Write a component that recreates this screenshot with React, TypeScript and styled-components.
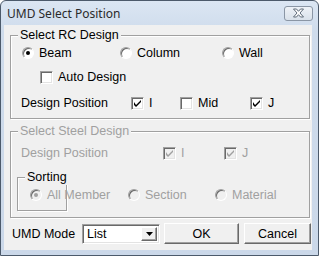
import styled, { createGlobalStyle } from "styled-components";

const Global = createGlobalStyle`
body{margin:0;background:#fff;}
`;

const font = `"Liberation Sans", Arial, sans-serif`;

const Window = styled.div`
width:319px;
height:256px;
box-sizing:border-box;
border:1px solid #4c5a6b;
border-radius:6px 6px 0 0;
background:linear-gradient(#dbe6f3, #cfdcec 30px, #cbd8e9);
display:flex;
flex-direction:column;
font-family:${font};
`;

const TitleBar = styled.div`
height:24px;
display:flex;
align-items:center;
padding:0 5px 0 6px;
`;

const Title = styled.div`
flex:1;
font-family:"Noto Sans", sans-serif;
font-size:12px;
color:#2a2a2a;
`;

const CloseBtn = styled.div`
width:29px;
height:15px;
box-sizing:border-box;
border:1px solid #8a96a5;
border-radius:3px;
background:linear-gradient(#eef2f7, #d9e1ea);
display:flex;
align-items:center;
justify-content:center;
`;

const Client = styled.div`
margin:0 6px 5px 3px;
flex:1;
background:#f0f0f0;
display:flex;
flex-direction:column;
font-size:12.5px;
color:#000;
`;

const Group = styled.div<{ $mt: number; $h: number }>`
position:relative;
margin:${(p) => p.$mt}px 2px 0 6px;
height:${(p) => p.$h}px;
box-sizing:border-box;
border:1px solid #a0a0a0;
box-shadow:inset 1px 1px 0 #fff, 1px 1px 0 #fff;
`;

const Legend = styled.div<{ $disabled?: boolean }>`
position:absolute;
top:-8px;
left:7px;
padding:0 2px;
line-height:15px;
background:#f0f0f0;
color:${(p) => (p.$disabled ? "#a0a0a0" : "#000")};
`;

const Row = styled.div<{ $cols: string; $pl: number; $mt: number }>`
display:grid;
grid-template-columns:${(p) => p.$cols};
align-items:center;
height:18px;
padding-left:${(p) => p.$pl}px;
margin-top:${(p) => p.$mt}px;
`;

const Item = styled.div<{ $disabled?: boolean }>`
display:flex;
align-items:center;
gap:5px;
white-space:nowrap;
color:${(p) => (p.$disabled ? "#a0a0a0" : "#000")};
`;

const Label = styled.span<{ $disabled?: boolean }>`
color:${(p) => (p.$disabled ? "#a0a0a0" : "#000")};
white-space:nowrap;
`;

const CheckBox = styled.span<{ $disabled?: boolean }>`
width:13px;
height:13px;
box-sizing:border-box;
border:1px solid;
border-color:#a0a0a0 #fff #fff #a0a0a0;
box-shadow:inset 1px 1px 0 #696969, inset -1px -1px 0 #e3e3e3;
background:${(p) => (p.$disabled ? "#f0f0f0" : "#fff")};
display:flex;
align-items:center;
justify-content:center;
flex:none;
`;

const RadioDot = styled.span<{ $disabled?: boolean }>`
width:12px;
height:12px;
box-sizing:border-box;
border-radius:50%;
border:1px solid;
border-color:#a0a0a0 #fff #fff #a0a0a0;
box-shadow:inset 1px 1px 0 #696969;
background:${(p) => (p.$disabled ? "#f0f0f0" : "#fff")};
display:flex;
align-items:center;
justify-content:center;
flex:none;
&::after{
content:"";
width:4px;
height:4px;
border-radius:50%;
background:${(p) => (p.$disabled ? "#a0a0a0" : "#000")};
opacity:var(--on);
}
`;

const SortBox = styled.div`
position:relative;
width:50px;
height:34px;
margin:15px 0 0 6px;
box-sizing:border-box;
border:1px solid #a0a0a0;
box-shadow:inset 1px 1px 0 #fff, 1px 1px 0 #fff;
`;

const SortRow = styled(Row)`
width:290px;
`;

const Footer = styled.div`
display:flex;
align-items:center;
margin-top:5px;
padding-left:8px;
height:21px;
`;

const ModeLabel = styled.span`
width:70px;
`;

const Combo = styled.div`
width:78px;
height:20px;
box-sizing:border-box;
border:1px solid;
border-color:#a0a0a0 #fff #fff #a0a0a0;
box-shadow:inset 1px 1px 0 #696969, inset -1px -1px 0 #e3e3e3;
background:#fff;
display:flex;
align-items:center;
padding:2px 2px 2px 4px;
`;

const ComboText = styled.span`
flex:1;
`;

const ComboBtn = styled.span`
width:16px;
height:14px;
box-sizing:border-box;
background:#f0f0f0;
border:1px solid;
border-color:#fff #696969 #696969 #fff;
box-shadow:inset -1px -1px 0 #a0a0a0;
display:flex;
align-items:center;
justify-content:center;
`;

const Button = styled.div<{ $w: number; $ml: number }>`
width:${(p) => p.$w}px;
height:21px;
margin-left:${(p) => p.$ml}px;
box-sizing:border-box;
border:1px solid;
border-color:#fff #696969 #696969 #fff;
box-shadow:inset -1px -1px 0 #a0a0a0;
background:#f0f0f0;
display:flex;
align-items:center;
justify-content:center;
`;

const Check = ({ color }: { color: string }) => (
  <svg width="7" height="7" viewBox="0 0 7 7">
    <path d="M0 2v3l2 2 5-5V0L2 5z" fill={color} />
  </svg>
);

const Box = ({ checked, disabled }: { checked?: boolean; disabled?: boolean }) => (
  <CheckBox $disabled={disabled}>{checked && <Check color={disabled ? "#a0a0a0" : "#000"} />}</CheckBox>
);

const Radio = ({ on, disabled }: { on?: boolean; disabled?: boolean }) => (
  <RadioDot $disabled={disabled} style={{ ["--on" as string]: on ? 1 : 0 }} />
);

export default function App() {
  return (
    <>
      <Global />
      <Window>
        <TitleBar>
          <Title>UMD Select Position</Title>
          <CloseBtn>
            <svg width="13" height="10" viewBox="0 0 13 10">
              <path d="M1.5 1h3l2 2.3L8.5 1h3L8 5l3.5 4h-3l-2-2.3-2 2.3h-3L5 5z" fill="#fff" stroke="#5f6b79" strokeWidth="1" strokeLinejoin="round" />
            </svg>
          </CloseBtn>
        </TitleBar>
        <Client>
          <Group $mt={10} $h={84}>
            <Legend>Select RC Design</Legend>
            <Row $cols="98px 102px auto" $pl={11} $mt={8}>
              <Item><Radio on />Beam</Item>
              <Item><Radio />Column</Item>
              <Item><Radio />Wall</Item>
            </Row>
            <Row $cols="auto" $pl={29} $mt={6}>
              <Item><Box />Auto Design</Item>
            </Row>
            <Row $cols="110px 49px 70px auto" $pl={10} $mt={8}>
              <Label>Design Position</Label>
              <Item><Box checked />I</Item>
              <Item><Box />Mid</Item>
              <Item><Box checked />J</Item>
            </Row>
          </Group>
          <Group $mt={12} $h={87}>
            <Legend $disabled>Select Steel Design</Legend>
            <Row $cols="142px 61px auto" $pl={10} $mt={12}>
              <Label $disabled>Design Position</Label>
              <Item $disabled><Box checked disabled />I</Item>
              <Item $disabled><Box checked disabled />J</Item>
            </Row>
            <SortBox>
              <Legend>Sorting</Legend>
              <SortRow $cols="98px 87px auto" $pl={12} $mt={8}>
                <Item $disabled><Radio on disabled />All Member</Item>
                <Item $disabled><Radio disabled />Section</Item>
                <Item $disabled><Radio disabled />Material</Item>
              </SortRow>
            </SortBox>
          </Group>
          <Footer>
            <ModeLabel>UMD Mode</ModeLabel>
            <Combo>
              <ComboText>List</ComboText>
              <ComboBtn>
                <svg width="7" height="4" viewBox="0 0 7 4"><path d="M0 0h7L3.5 4z" fill="#000" /></svg>
              </ComboBtn>
            </Combo>
            <Button $w={75} $ml={4}>OK</Button>
            <Button $w={67} $ml={5}>Cancel</Button>
          </Footer>
        </Client>
      </Window>
    </>
  );
}
